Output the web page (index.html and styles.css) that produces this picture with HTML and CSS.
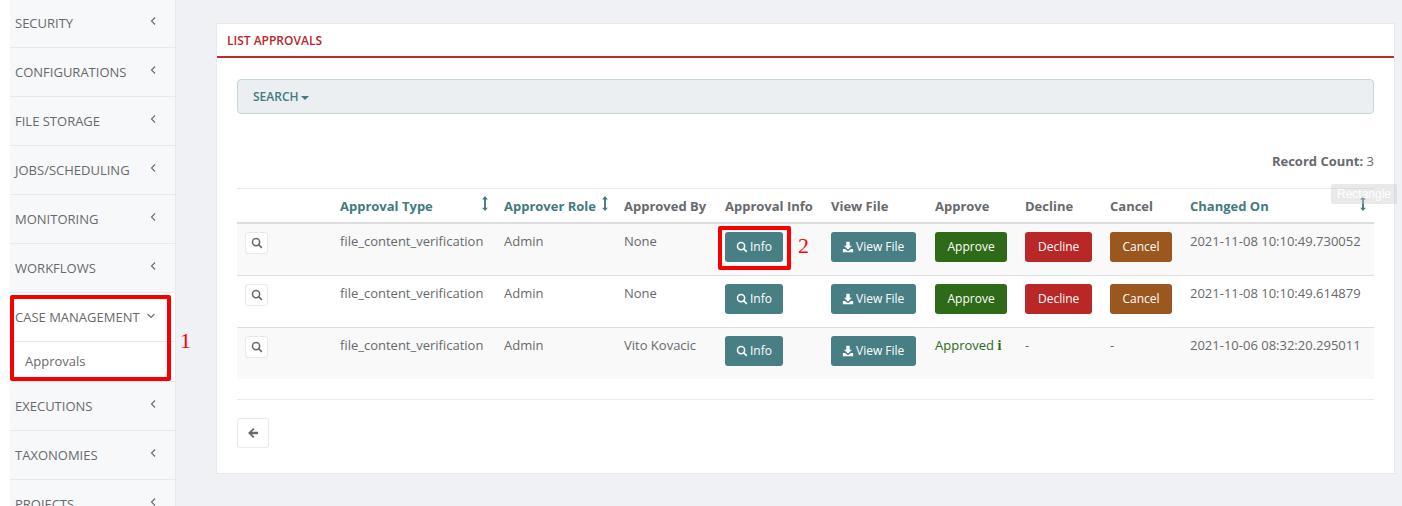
FILE: index.html
```html
<!DOCTYPE html>
<html lang="en">
<head>
  <meta charset="UTF-8" />
  <title>List Approvals</title>
  <link rel="stylesheet" href="styles.css">
</head>
<body>
  <svg class="icon-defs" width="0" height="0">
    <symbol id="i-search" viewBox="0 0 14 14"><path d="M5.900 .8a5.100 5.100 0 1 0 0 10.200 5.100 5.100 0 0 0 0-10.200zm0 1.800a3.300 3.300 0 1 1 0 6.600 3.300 3.300 0 0 1 0-6.600z" fill-rule="evenodd" fill="currentColor"/><path d="M9.300 8l4 4-1.400 1.400-4-4z" fill="currentColor"/></symbol>
    <symbol id="i-download" viewBox="0 0 14 14"><path d="M5 1h4v4.600h2.600L7 10 2.400 5.600H5z" fill="currentColor"/><path d="M1 9.400h2.600L7 12l3.400-2.600H13V13H1z" fill="currentColor"/></symbol>
    <symbol id="i-sort" viewBox="0 0 8 16"><path d="M4 0l3 3.600H5v8.800h2L4 16l-3-3.600h2V3.600H1z" fill="currentColor"/></symbol>
    <symbol id="i-left" viewBox="0 0 8 10"><path d="M6 1.500L2.500 5 6 8.500" fill="none" stroke="currentColor" stroke-width="1.100"/></symbol>
    <symbol id="i-down" viewBox="0 0 10 8"><path d="M1.500 2L5 5.500 8.500 2" fill="none" stroke="currentColor" stroke-width="1.100"/></symbol>
  </svg>

  <div class="page">
    <nav class="sidebar">
      <ul class="nav-list">
        <li class="nav-item"><span>SECURITY</span><svg class="chevron"><use href="#i-left"/></svg></li>
        <li class="nav-item"><span>CONFIGURATIONS</span><svg class="chevron"><use href="#i-left"/></svg></li>
        <li class="nav-item"><span>FILE STORAGE</span><svg class="chevron"><use href="#i-left"/></svg></li>
        <li class="nav-item"><span>JOBS/SCHEDULING</span><svg class="chevron"><use href="#i-left"/></svg></li>
        <li class="nav-item"><span>MONITORING</span><svg class="chevron"><use href="#i-left"/></svg></li>
        <li class="nav-item"><span>WORKFLOWS</span><svg class="chevron"><use href="#i-left"/></svg></li>
        <li class="nav-open">
          <div class="nav-item nav-item-open"><span>CASE MANAGEMENT</span><svg class="chevron-down"><use href="#i-down"/></svg></div>
          <div class="nav-sub">Approvals</div>
          <div class="mark mark-nav"></div>
          <div class="mark-num mark-num-nav">1</div>
        </li>
        <li class="nav-item"><span>EXECUTIONS</span><svg class="chevron"><use href="#i-left"/></svg></li>
        <li class="nav-item"><span>TAXONOMIES</span><svg class="chevron"><use href="#i-left"/></svg></li>
        <li class="nav-item"><span>PROJECTS</span><svg class="chevron"><use href="#i-left"/></svg></li>
      </ul>
    </nav>

    <main class="content">
      <section class="panel">
        <h2 class="panel-title">LIST APPROVALS</h2>
        <div class="panel-body">
          <div class="search-bar">SEARCH<span class="caret"></span></div>
          <p class="record-count"><b>Record Count:</b> 3</p>

          <div class="table-wrap">
            <table class="approvals">
              <thead>
                <tr>
                  <th class="col-open"></th>
                  <th class="col-type sortable">Approval Type<svg class="sort"><use href="#i-sort"/></svg></th>
                  <th class="col-role sortable">Approver Role<svg class="sort"><use href="#i-sort"/></svg></th>
                  <th class="col-by">Approved By</th>
                  <th class="col-info">Approval Info</th>
                  <th class="col-file">View File</th>
                  <th class="col-approve">Approve</th>
                  <th class="col-decline">Decline</th>
                  <th class="col-cancel">Cancel</th>
                  <th class="col-changed sortable">Changed On<svg class="sort"><use href="#i-sort"/></svg></th>
                </tr>
              </thead>
              <tbody>
                <tr>
                  <td><button class="btn-open"><svg><use href="#i-search"/></svg></button></td>
                  <td>file_content_verification</td>
                  <td>Admin</td>
                  <td>None</td>
                  <td class="cell-marked">
                    <button class="btn btn-teal"><svg><use href="#i-search"/></svg>Info</button>
                    <div class="mark mark-info"></div>
                    <div class="mark-num mark-num-info">2</div>
                  </td>
                  <td><button class="btn btn-teal btn-file"><svg><use href="#i-download"/></svg>View File</button></td>
                  <td><button class="btn btn-green">Approve</button></td>
                  <td><button class="btn btn-red">Decline</button></td>
                  <td><button class="btn btn-brown">Cancel</button></td>
                  <td>2021-11-08 10:10:49.730052</td>
                </tr>
                <tr>
                  <td><button class="btn-open"><svg><use href="#i-search"/></svg></button></td>
                  <td>file_content_verification</td>
                  <td>Admin</td>
                  <td>None</td>
                  <td><button class="btn btn-teal"><svg><use href="#i-search"/></svg>Info</button></td>
                  <td><button class="btn btn-teal btn-file"><svg><use href="#i-download"/></svg>View File</button></td>
                  <td><button class="btn btn-green">Approve</button></td>
                  <td><button class="btn btn-red">Decline</button></td>
                  <td><button class="btn btn-brown">Cancel</button></td>
                  <td>2021-11-08 10:10:49.614879</td>
                </tr>
                <tr>
                  <td><button class="btn-open"><svg><use href="#i-search"/></svg></button></td>
                  <td>file_content_verification</td>
                  <td>Admin</td>
                  <td>Vito Kovacic</td>
                  <td><button class="btn btn-teal"><svg><use href="#i-search"/></svg>Info</button></td>
                  <td><button class="btn btn-teal btn-file"><svg><use href="#i-download"/></svg>View File</button></td>
                  <td class="approved">Approved <b class="info-mark">i</b></td>
                  <td>-</td>
                  <td>-</td>
                  <td>2021-10-06 08:32:20.295011</td>
                </tr>
              </tbody>
            </table>
            <div class="tooltip">Rectangle</div>
          </div>

          <hr class="divider">
          <button class="btn-back">
            <svg viewBox="0 0 12 12"><path d="M6.200 1L1 6l5.200 5 1.300-1.300-2.600-2.500H11V4.800H4.900l2.600-2.500z" fill="currentColor"/></svg>
          </button>
        </div>
      </section>
    </main>
  </div>
</body>
</html>
```

FILE: styles.css
```css
html, body {
  height: 100%;
  margin: 0;
  background-color: #fff;
  font-family: 'Open Sans', sans-serif;
  font-size: 13px;
  color: #676a6c;
  overflow: hidden;
}

.icon-defs {
  position: absolute;
}

.page {
  display: flex;
  height: 506px;
  padding-left: 10px;
  overflow: hidden;
}

/* Sidebar */
.sidebar {
  width: 165px;
  flex-shrink: 0;
  background-color: #f7f8fa;
  border-right: 1px solid #e7e9ec;
}

.nav-list {
  list-style: none;
  margin: -1px 0 0;
  padding: 0;
}

.nav-item {
  position: relative;
  height: 48px;
  line-height: 48px;
  padding-left: 5px;
  border-bottom: 1px solid #e7e9ec;
}

.chevron {
  position: absolute;
  left: 139px;
  top: 17px;
  width: 8px;
  height: 10px;
}

.chevron-down {
  position: absolute;
  left: 136px;
  top: 19px;
  width: 10px;
  height: 8px;
}

.nav-open {
  position: relative;
  background-color: #fff;
  border-bottom: 1px solid #e7e9ec;
}

.nav-item-open {
  background-color: #fff;
}

.nav-sub {
  height: 39px;
  line-height: 39px;
  padding-left: 15px;
}

/* Red annotations */
.mark {
  position: absolute;
  box-sizing: border-box;
  border: 4px solid #f80000;
  border-radius: 2px;
  pointer-events: none;
}

.mark-nav {
  left: 0;
  top: 2px;
  width: 161px;
  height: 86px;
}

.mark-info {
  left: 1px;
  top: 2px;
  width: 73px;
  height: 44px;
}

.mark-num {
  position: absolute;
  font-family: 'Liberation Serif', serif;
  font-size: 22px;
  line-height: 24px;
  color: #f00;
}

.mark-num-nav {
  left: 170px;
  top: 36px;
}

.mark-num-info {
  left: 81px;
  top: 10px;
}

/* Main content */
.content {
  flex: 1;
  min-width: 0;
  background-color: #eff1f5;
  padding: 23px 7px 0 40px;
}

.panel {
  box-sizing: border-box;
  height: 451px;
  background-color: #fff;
  border: 1px solid #e7e9ec;
}

.panel-title {
  margin: 0;
  height: 32px;
  line-height: 33px;
  padding-left: 10px;
  font-size: 12px;
  font-weight: 600;
  color: #b92727;
  border-bottom: 2px solid #c12a2a;
}

.panel-body {
  padding: 21px 20px 0;
}

.search-bar {
  box-sizing: border-box;
  height: 35px;
  line-height: 33px;
  padding-left: 15px;
  font-size: 12px;
  font-weight: 600;
  color: #437a80;
  background-color: #ebeff2;
  border: 1px solid #c9d6d9;
  border-radius: 4px;
}

.caret {
  display: inline-block;
  margin-left: 2px;
  vertical-align: middle;
  border-top: 4px solid #437a80;
  border-left: 4px solid transparent;
  border-right: 4px solid transparent;
}

.record-count {
  margin: 39px 0 0;
  height: 35px;
  line-height: 17px;
  text-align: right;
}

.record-count b {
  font-weight: 700;
}

/* Table */
.table-wrap {
  position: relative;
}

.approvals {
  width: 1137px;
  table-layout: fixed;
  border-collapse: collapse;
}

.approvals th {
  box-sizing: border-box;
  height: 34px;
  padding: 1px 8px 0;
  text-align: left;
  font-weight: 700;
  white-space: nowrap;
  border-top: 1px solid #e7e9ec;
  border-bottom: 2px solid #ddd;
}

.col-open { width: 95px; }
.col-type { width: 164px; }
.col-role { width: 120px; }
.col-by { width: 101px; }
.col-info { width: 106px; }
.col-file { width: 104px; }
.col-approve { width: 90px; }
.col-decline { width: 85px; }
.col-cancel { width: 80px; }

.sortable {
  position: relative;
  color: #437a80;
}

.sort {
  position: absolute;
  right: 7px;
  top: 7px;
  width: 8px;
  height: 15px;
  color: #437a80;
}

.approvals td {
  box-sizing: border-box;
  height: 52px;
  padding: 8px;
  line-height: 18px;
  vertical-align: top;
  white-space: nowrap;
  border-bottom: 1px solid #ddd;
}

.approvals tbody tr:nth-child(odd) {
  background-color: #f9f9f9;
}

.approvals tbody tr:last-child td {
  height: 51px;
  border-bottom: 0;
}

.cell-marked {
  position: relative;
}

.approved {
  color: #2e6a17;
}

.info-mark {
  font-family: 'Liberation Serif', serif;
  font-size: 14px;
  font-weight: 700;
}

/* Buttons */
button {
  font-family: inherit;
  cursor: pointer;
}

.btn {
  display: flex;
  align-items: center;
  height: 30px;
  margin-bottom: 5px;
  padding: 0 11px;
  font-size: 12px;
  color: #fff;
  border: 0;
  border-radius: 3px;
}

.btn svg {
  width: 12px;
  height: 12px;
  margin-right: 2px;
}

.btn-teal { background-color: #487f85; }
.btn-file { padding-right: 12px; }
.btn-green { background-color: #2e6a17; padding: 0 12.5px; }
.btn-red { background-color: #b92727; padding: 0 13px; }
.btn-brown { background-color: #9b5720; padding: 0 12.5px; }

.btn-open {
  display: flex;
  align-items: center;
  justify-content: center;
  width: 23px;
  height: 22px;
  padding: 0;
  color: #676a6c;
  background-color: #fff;
  border: 1px solid #e7e9ec;
  border-radius: 3px;
}

.btn-open svg {
  width: 12px;
  height: 12px;
}

.divider {
  margin: 20px 0 18px;
  height: 1px;
  border: 0;
  background-color: #e7e9ec;
}

.btn-back {
  display: flex;
  align-items: center;
  justify-content: center;
  width: 32px;
  height: 30px;
  padding: 0;
  color: #676a6c;
  background-color: #fff;
  border: 1px solid #e7e9ec;
  border-radius: 3px;
}

.btn-back svg {
  width: 12px;
  height: 12px;
}

.tooltip {
  position: absolute;
  left: 1094px;
  top: -4px;
  width: 66px;
  height: 20px;
  line-height: 20px;
  text-align: center;
  font-family: 'Liberation Sans', sans-serif;
  font-size: 12px;
  color: #fff;
  background-color: rgba(200, 200, 200, 0.4);
  border-radius: 2px;
}
```
